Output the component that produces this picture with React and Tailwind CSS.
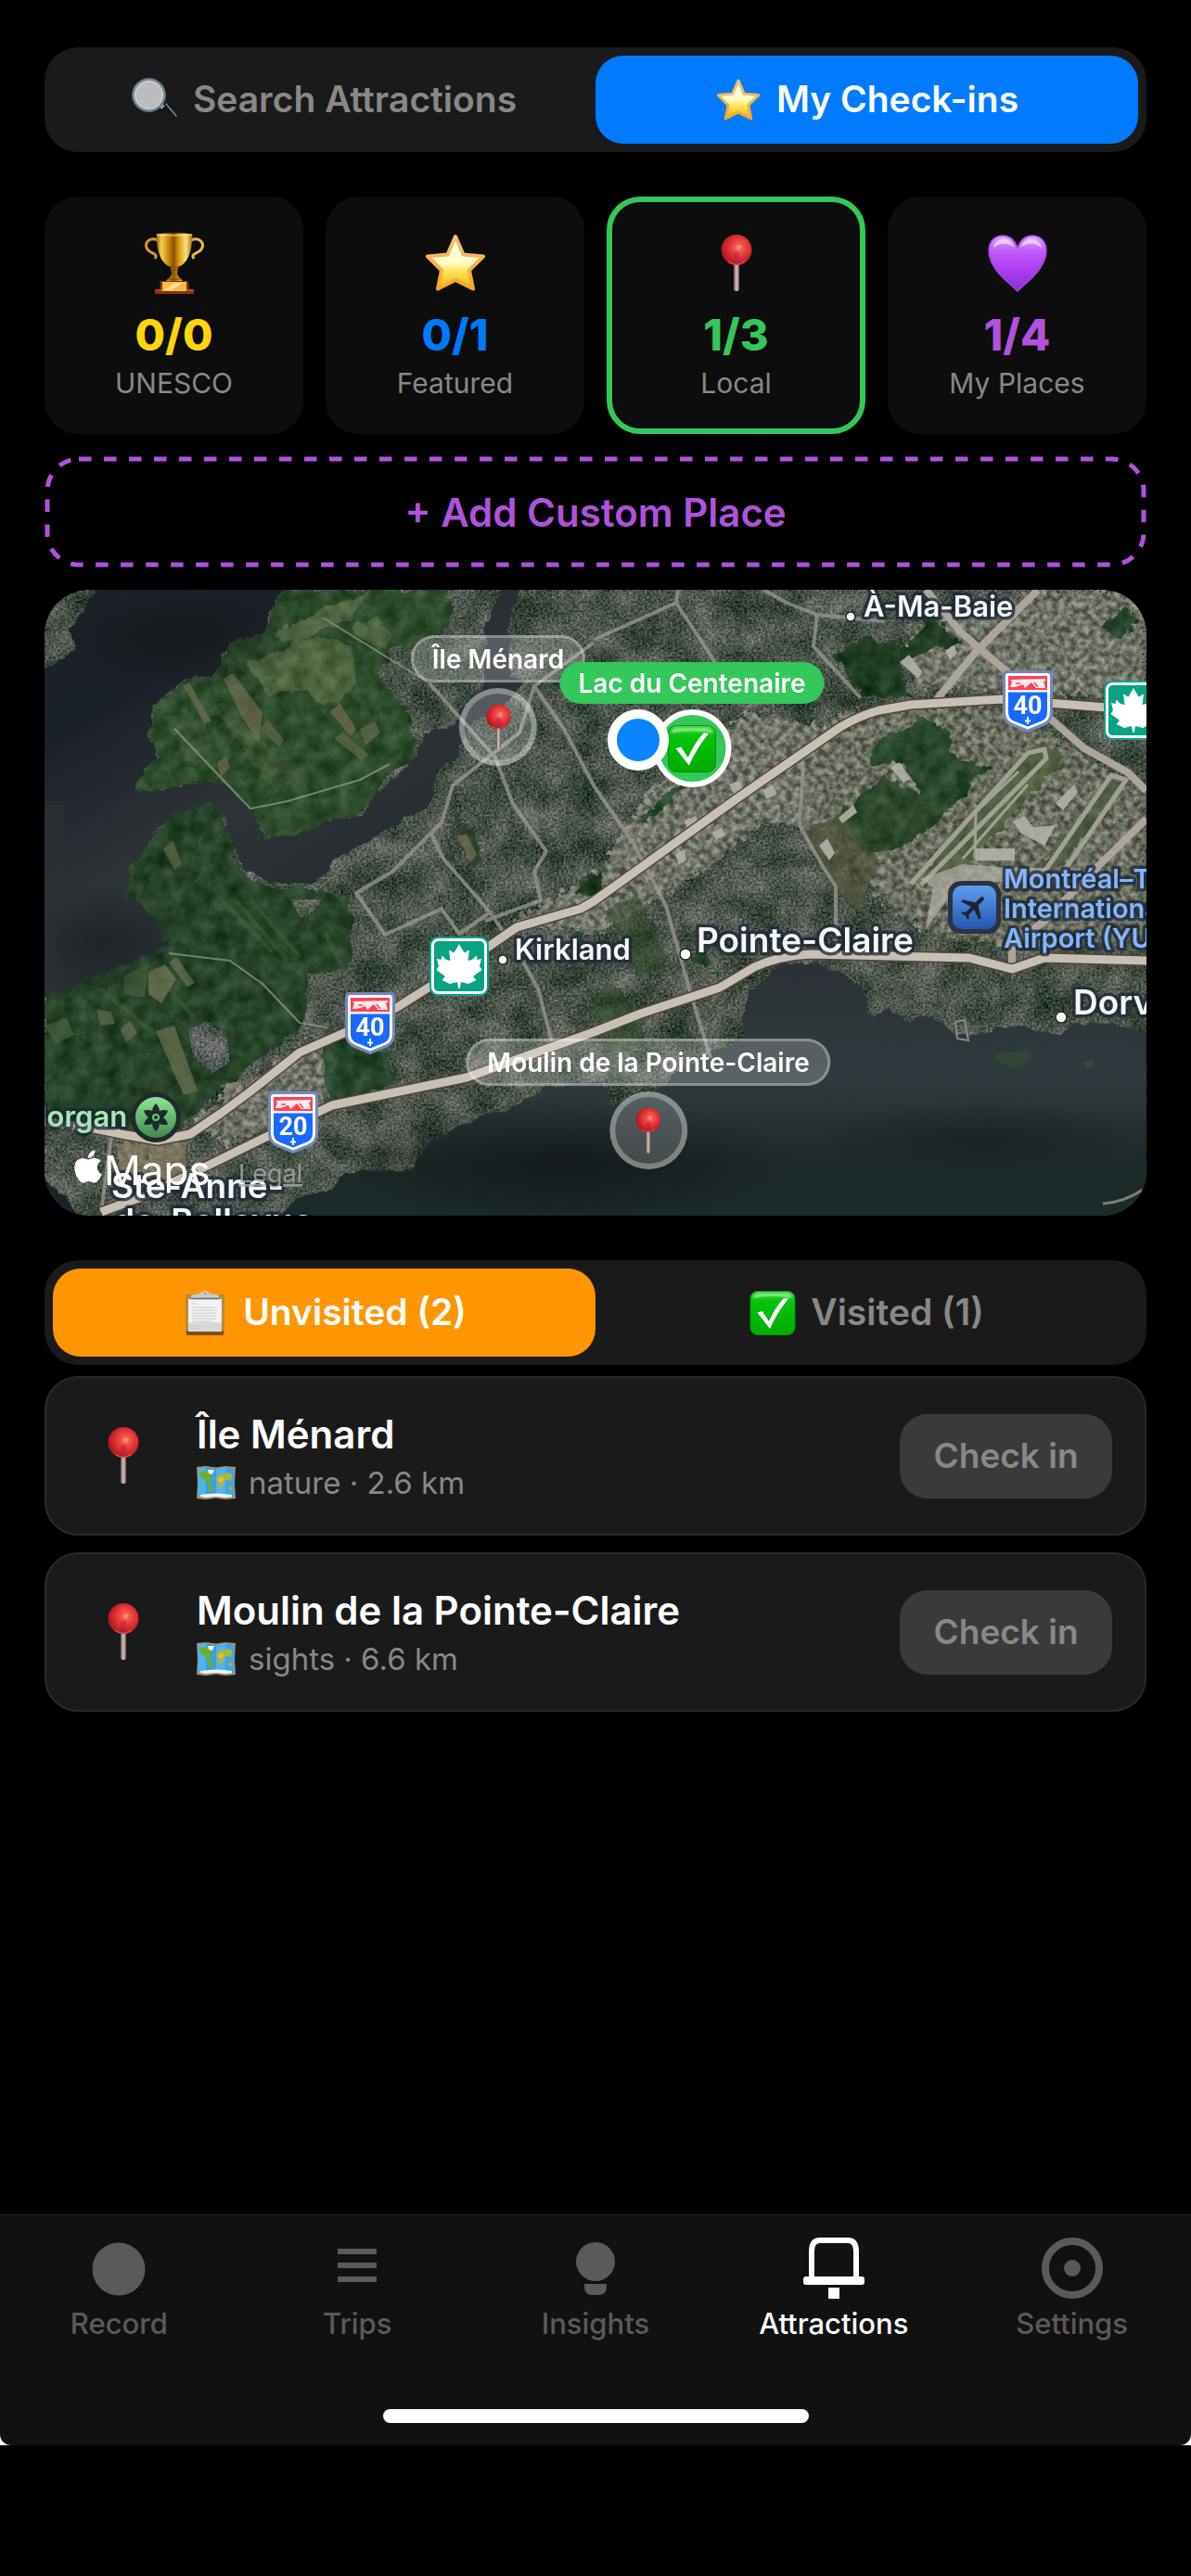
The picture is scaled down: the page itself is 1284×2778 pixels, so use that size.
import React, { useState } from 'react'
import { FaApple } from 'react-icons/fa'
import { MdFlight } from 'react-icons/md'

const MAP_WIDTH = 1188
const MAP_HEIGHT = 675

const StarEmoji = ({ className }) => (
  <svg viewBox="0 0 66 66" className={className} aria-hidden="true">
    <defs>
      <linearGradient id="starFill" x1="0" y1="0" x2="0" y2="1">
        <stop offset="0" stopColor="#fffbe8" />
        <stop offset="0.5" stopColor="#fffbc9" />
        <stop offset="0.68" stopColor="#ffe150" />
        <stop offset="1" stopColor="#f9ae1c" />
      </linearGradient>
      <linearGradient id="starEdge" x1="0" y1="0" x2="0" y2="1">
        <stop offset="0" stopColor="#f3c27a" />
        <stop offset="1" stopColor="#f5a623" />
      </linearGradient>
    </defs>
    <path
      d="M33 4 L41.5 23.5 L63 25.5 L48 40.5 L52 60.5 L33 51 L14 60.5 L18 40.5 L3 25.5 L24.5 23.5 Z"
      fill="url(#starFill)"
      stroke="url(#starEdge)"
      strokeWidth="4"
      strokeLinejoin="round"
    />
  </svg>
)

const TrophyEmoji = ({ className }) => (
  <svg viewBox="0 0 66 66" className={className} aria-hidden="true">
    <defs>
      <linearGradient id="cup" x1="0" y1="0" x2="1" y2="0">
        <stop offset="0" stopColor="#8f5a02" />
        <stop offset="0.14" stopColor="#f7cf5b" />
        <stop offset="0.32" stopColor="#d08f0a" />
        <stop offset="0.48" stopColor="#8a5200" />
        <stop offset="0.62" stopColor="#d9980c" />
        <stop offset="0.82" stopColor="#ffe07a" />
        <stop offset="1" stopColor="#a86c05" />
      </linearGradient>
    </defs>
    <path d="M15 8 C5 4 0 12 4 18 C8 23 16 22 12 28" fill="none" stroke="#d59a22" strokeWidth="3" />
    <path d="M51 8 C61 4 66 12 62 18 C58 23 50 22 54 28" fill="none" stroke="#e8b84a" strokeWidth="3" />
    <path
      d="M13.5 1.5 Q33 -1 52.5 1.5 C52 20 48 33 37 37 L36 44 C37 49 42 50 42 53 L24 53 C24 50 29 49 30 44 L29 37 C18 33 14 20 13.5 1.5 Z"
      fill="url(#cup)"
    />
    <path d="M14 2 Q33 4 52 2" fill="none" stroke="#ffe28a" strokeWidth="1.2" />
    <path d="M28 37 H38 M29 40 H37 M25 50 H41" stroke="#7a4600" strokeWidth="1" />
    <path d="M18 52 H48 L49 61 H54 L54 66 H12 L12 62 L17 61 Z" fill="#8b3206" />
    <path d="M12 62 H54" stroke="#b4561c" strokeWidth="1.5" />
    <rect x="20" y="53" width="26" height="10" fill="#f0bd4c" />
    <path d="M22 62 L34 54 H42 L30 62 Z" fill="#ffe08e" />
  </svg>
)

const PinEmoji = ({ className }) => (
  <svg viewBox="0 0 66 66" className={className} aria-hidden="true">
    <defs>
      <radialGradient id="pinBall" cx="0.58" cy="0.42" r="0.6">
        <stop offset="0" stopColor="#ffa08a" />
        <stop offset="0.2" stopColor="#f4584e" />
        <stop offset="0.65" stopColor="#d92a2c" />
        <stop offset="1" stopColor="#a3181f" />
      </radialGradient>
      <linearGradient id="pinStick" x1="0" y1="0" x2="1" y2="0">
        <stop offset="0" stopColor="#5f5350" />
        <stop offset="0.5" stopColor="#dcc5bd" />
        <stop offset="1" stopColor="#6e5c58" />
      </linearGradient>
    </defs>
    <rect x="30" y="30" width="6" height="33" rx="2.5" fill="url(#pinStick)" />
    <circle cx="33" cy="18.5" r="16.5" fill="url(#pinBall)" />
    <path d="M30 21 H36 V33 Q33 35 30 33 Z" fill="#b32238" opacity="0.5" />
    <path d="M24 31 Q33 38 42 31" fill="none" stroke="#f0627f" strokeWidth="1.5" opacity="0.7" />
  </svg>
)

const HeartEmoji = ({ className }) => (
  <svg viewBox="0 0 66 66" className={className} aria-hidden="true">
    <defs>
      <linearGradient id="heartFill" x1="0" y1="0" x2="0" y2="1">
        <stop offset="0" stopColor="#dca6fb" />
        <stop offset="0.28" stopColor="#bf5df5" />
        <stop offset="0.6" stopColor="#b13df0" />
        <stop offset="1" stopColor="#8a2ed4" />
      </linearGradient>
    </defs>
    <path
      d="M33 63 C25 54 2 40 2 19 C2 9 9 3 17 3 C25 3 30 8 33 16 C36 8 41 3 49 3 C57 3 64 9 64 19 C64 40 41 54 33 63 Z"
      fill="url(#heartFill)"
      stroke="#a243e2"
      strokeWidth="1.5"
    />
    <path d="M7 17 C8 9 14 6 19 6.5 C25 7 28 11 30 16 C24 11 12 10 7 17 Z" fill="#fff" opacity="0.55" />
    <path d="M59 17 C58 9 52 6 47 6.5 C41 7 38 11 36 16 C42 11 54 10 59 17 Z" fill="#fff" opacity="0.55" />
  </svg>
)

const MagnifierEmoji = ({ className }) => (
  <svg viewBox="0 0 50 48" className={className} aria-hidden="true">
    <path d="M34 31 L44 42.5" stroke="#15191d" strokeWidth="10" strokeLinecap="round" />
    <path d="M37 28 L48 41" stroke="#7d8a95" strokeWidth="1.5" strokeLinecap="round" />
    <path d="M29 27 L34 32" stroke="#9aa5ae" strokeWidth="5" />
    <circle cx="18.5" cy="18.5" r="16.5" fill="#bcbcbc" stroke="#7d8c98" strokeWidth="3" />
    <circle cx="18.5" cy="18.5" r="18" fill="none" stroke="#55616c" strokeWidth="1" />
    <circle cx="18.5" cy="18.5" r="15" fill="none" stroke="#dfe5e9" strokeWidth="1" />
  </svg>
)

const ClipboardEmoji = ({ className }) => (
  <svg viewBox="0 0 50 48" className={className} aria-hidden="true">
    <rect x="4" y="4" width="42" height="44" rx="2" fill="#b98a3e" />
    <rect x="5" y="43" width="40" height="5" rx="1" fill="#7c4f16" />
    <path d="M7 9 H43 V44 H7 Z" fill="#f2f2f2" />
    <path d="M7 34 H43 V44 H7 Z" fill="#d8d8d8" />
    <path
      d="M11 14 H16 M11 18 H36 M11 21 H38 M11 24 H37 M11 27 H38 M11 30 H37 M11 33 H32 M11 38 H17 M11 40.5 H18"
      stroke="#c9c9c9"
      strokeWidth="1.2"
    />
    <path d="M10 9 V6 Q10 4 14 4 L20 3 Q21 0 25 0 Q29 0 30 3 L36 4 Q40 4 40 6 V9 Z" fill="#c3cad2" />
    <path d="M10 8.5 H40" stroke="#6f6a66" strokeWidth="1.5" />
    <circle cx="25" cy="3" r="1.5" fill="#ff9500" />
  </svg>
)

const CheckEmoji = ({ className }) => (
  <svg viewBox="0 0 50 48" className={className} aria-hidden="true">
    <defs>
      <linearGradient id="checkFill" x1="0" y1="0" x2="0" y2="1">
        <stop offset="0" stopColor="#57d95b" />
        <stop offset="0.22" stopColor="#06c40b" />
        <stop offset="1" stopColor="#00ab04" />
      </linearGradient>
    </defs>
    <rect x="1" y="0.5" width="48" height="47" rx="8" fill="url(#checkFill)" stroke="#0a8f12" strokeWidth="1" />
    <path d="M4 8 Q5 3 11 3 H39 Q45 3 46 8 Q25 4 4 8 Z" fill="#a8f0a8" opacity="0.6" />
    <path d="M8.5 23.5 L14 22 L21 33 Q28 17 37 8 L42 8.5 Q30 23 22 41 Z" fill="#fff" />
  </svg>
)

const WorldMapEmoji = ({ className }) => (
  <svg viewBox="0 0 42 36" className={className} aria-hidden="true">
    <path d="M0 1 L10 0 L21 1.5 L31 0 L42 1 L41 18 L42 35 L31 36 L21 34.5 L10 36 L0 35 L1 18 Z" fill="#b58a5a" />
    <path d="M1.5 2 L10 1.5 L21 3 L31 1.5 L40.5 2.5 L40 18 L40.5 33.5 L31 34 L21 33 L10 34 L1.5 33 Z" fill="#4fb3ee" />
    <path d="M10 1.5 L21 3 V33 L10 34 Z" fill="#3b9fe0" />
    <path d="M31 1.5 L40.5 2.5 V33.5 L31 34 Z" fill="#3fa5e4" />
    <path d="M3 7 L10 5 L16 8 L17 12 L13 17 L15 20 L18 23 L15 29 L13 27 L12 20 L8 15 L4 11 Z" fill="#6fae2e" />
    <path d="M12 4 L19 4 L17 9 L13 8 Z" fill="#e9eff2" />
    <path d="M22 12 L27 8 L35 7 L39 10 L36 16 L31 15 L29 20 L25 26 L23 19 L21 16 Z" fill="#a7b93b" />
    <path d="M24 13 L29 12 L28 17 L24 17 Z" fill="#e7c14f" />
    <path d="M34 22 L38 22 L38 26 L34 25 Z" fill="#d99a3a" />
    <path d="M4 31 Q21 28 38 31 L38 33.5 L31 34 L21 33 L10 34 L4 33 Z" fill="#eef4f7" />
  </svg>
)

const LEAF =
  'M32 8 L37.5 17.5 L43 14.5 L41.5 26 L46 25 L50.5 20.5 L51.5 25 L56 24 L54 32 L56.5 36 L47 43 L50.5 47 L42 51 L34 49 L32.8 56 H31.2 L30 49 L22 51 L13.5 47 L17 43 L7.5 36 L10 32 L8 24 L12.5 25 L13.5 20.5 L18 25 L22.5 26 L21 14.5 L26.5 17.5 Z'

const Shield = ({ x, y, number }) => (
  <g transform={`translate(${x} ${y})`}>
    <path d="M5 0 H49 Q54 0 54 5 V45 Q54 56 44 60 L27 67 L10 60 Q0 56 0 45 V5 Q0 0 5 0 Z" fill="#7288b5" />
    <path d="M6 3 H48 Q51 3 51 6 V45 Q51 54 43 57 L27 63.5 L11 57 Q3 54 3 45 V6 Q3 3 6 3 Z" fill="#fff" />
    <path d="M6 6 H48 V21 H6 Z" fill="#ff4057" />
    <path d="M8 10 L46 9 V11 L44 12 L46 19 H36 L31 13 L24 19 L22 15 L13 18 L8 18 L10 12 Z" fill="#fff" opacity="0.9" />
    <path d="M14 14 H19 M32 18 L30 14 M38 18 L34 13" stroke="#ff4057" strokeWidth="1.5" />
    <path d="M6 23.5 H48 V45 Q48 52 42 54.5 L27 60.5 L12 54.5 Q6 52 6 45 Z" fill="#1769ff" />
    <text x="27" y="47" textAnchor="middle" fontFamily="Roboto, sans-serif" fontSize="27" fontWeight="700" fill="#fff">
      {number}
    </text>
    <path d="M27 50 V58 M24 54.5 H30" stroke="#fff" strokeWidth="1.8" />
  </g>
)

const LeafSign = ({ x, y }) => (
  <g transform={`translate(${x} ${y})`}>
    <rect width="64" height="64" rx="9" fill="#07a383" />
    <rect x="3.5" y="3.5" width="57" height="57" rx="6" fill="none" stroke="#fff" strokeWidth="3" />
    <path d={LEAF} fill="#fff" />
  </g>
)

const PlaceName = ({ x, y, size, color = '#f7f7f7', children }) => (
  <text
    x={x}
    y={y}
    fontSize={size}
    fontWeight="600"
    fill={color}
    stroke="#1b2537"
    strokeOpacity="0.75"
    strokeWidth="7"
    strokeLinejoin="round"
    paintOrder="stroke"
  >
    {children}
  </text>
)

const Town = ({ x, y, r = 5 }) => <circle cx={x} cy={y} r={r} fill="#fff" stroke="#222" strokeWidth="1.5" />

const HIGHWAYS = [
  'M0 574 L49 580 L88 588 L122 594 L157 587 L191 564 L222 541 L275 499 L325 477 L379 451 L417 427 L480 384 L509 364 L578 344 L592 336 L748 224 L858 148 Q878 136 900 130 L934 124 L1032 118 L1145 127 L1188 131',
  'M61 671 L107 654 L176 621 L237 591 L310 556 L455 526 L592 477 L643 457 L728 429 L765 407 Q790 395 825 393 L997 397 L1043 409 L1078 397 L1188 400'
]

const AVENUES = [
  'M950 0 L989 47 L1036 87 L1082 137 L1121 171 L1168 197 L1188 217',
  'M1071 0 L1004 67 L962 118',
  'M1188 247 L1137 297 L1078 357 L1043 384 V405'
]

const STREETS = [
  'M415 101 L486 181 L505 231 L541 282 L528 304 L535 335 L475 357',
  'M592 57 L528 104 L512 154 L440 211 L428 251 L375 304 L336 327 L367 372 L428 344 L447 371 L482 347',
  'M528 104 L560 150 L592 211 L635 274 L670 341 L697 437 L718 505',
  'M417 264 L430 290 L451 314 L482 350 L495 370',
  'M592 54 L681 14 L683 0 M681 14 L724 80',
  'M775 0 L800 14 L833 27 L905 34 M833 27 L829 61 L880 117',
  'M818 190 L814 254 L840 300 L853 320 V385',
  'M515 400 L532 430 L547 487',
  'M61 671 L72 590'
]

const SatelliteMap = () => (
  <svg
    viewBox={`0 0 ${MAP_WIDTH} ${MAP_HEIGHT}`}
    preserveAspectRatio="xMidYMid slice"
    className="block h-full w-full"
    role="img"
    aria-label="Satellite map of Montréal's West Island"
  >
    <defs>
      <filter id="urban" x="0" y="0" width="100%" height="100%" colorInterpolationFilters="sRGB">
        <feTurbulence type="fractalNoise" baseFrequency="0.03" numOctaves="3" seed="11" result="blocks" />
        <feColorMatrix in="blocks" values="1 0 0 0 0  0.8 0 0 0 0.1  0.9 0 0 0 0.05  0 0 0 0 1" result="patches" />
        <feTurbulence type="fractalNoise" baseFrequency="0.4" numOctaves="2" seed="4" />
        <feColorMatrix values="1.1 0 0 0 -0.05  1 0.1 0 0 -0.05  1 0 0.1 0 -0.05  0 0 0 0 1" result="grain" />
        <feComposite in="SourceGraphic" in2="grain" operator="arithmetic" k2="1" k3="0.5" k4="-0.25" result="textured" />
        <feComposite in="textured" in2="patches" operator="arithmetic" k2="1" k3="0.4" k4="-0.2" />
        <feComposite in2="SourceAlpha" operator="in" />
      </filter>
      <filter id="foliage" x="0" y="0" width="100%" height="100%" colorInterpolationFilters="sRGB">
        <feTurbulence type="fractalNoise" baseFrequency="0.06" numOctaves="5" seed="9" result="noise" />
        <feColorMatrix in="noise" values="1 0 0 0 0  1 0 0 0 0  1 0 0 0 0  0 0 0 0 1" result="grain" />
        <feDisplacementMap in="SourceGraphic" in2="noise" scale="16" xChannelSelector="R" yChannelSelector="G" result="rough" />
        <feComposite in="rough" in2="grain" operator="arithmetic" k2="1" k3="0.24" k4="-0.12" />
        <feComposite in2="rough" operator="in" />
      </filter>
      <filter id="shore" x="0" y="0" width="100%" height="100%" colorInterpolationFilters="sRGB">
        <feTurbulence type="fractalNoise" baseFrequency="0.08" numOctaves="3" seed="2" result="noise" />
        <feDisplacementMap in="SourceGraphic" in2="noise" scale="9" xChannelSelector="R" yChannelSelector="G" />
      </filter>
      <filter id="roofs" x="0" y="0" width="100%" height="100%" colorInterpolationFilters="sRGB">
        <feTurbulence type="fractalNoise" baseFrequency="0.15" numOctaves="3" seed="21" result="noise" />
        <feColorMatrix in="noise" values="2 0 0 0 -0.5  2 0 0 0 -0.5  2 0 0 0 -0.5  0 0 0 0 1" result="grain" />
        <feDisplacementMap in="SourceGraphic" in2="noise" scale="24" xChannelSelector="R" yChannelSelector="G" result="rough" />
        <feComposite in="rough" in2="grain" operator="arithmetic" k2="1" k3="0.36" k4="-0.18" />
        <feComposite in2="rough" operator="in" />
      </filter>
      <linearGradient id="northLake" x1="0" y1="0" x2="0.7" y2="1">
        <stop offset="0" stopColor="#1f242b" />
        <stop offset="0.25" stopColor="#1a2027" />
        <stop offset="0.55" stopColor="#2d3337" />
        <stop offset="1" stopColor="#23272f" />
      </linearGradient>
      <linearGradient id="southLake" x1="0" y1="0" x2="0" y2="1">
        <stop offset="0" stopColor="#2b3136" />
        <stop offset="0.45" stopColor="#303a3e" />
        <stop offset="0.75" stopColor="#1e2a2a" />
        <stop offset="1" stopColor="#1b2b29" />
      </linearGradient>
      <radialGradient id="deep">
        <stop offset="0" stopColor="#101416" stopOpacity="0.9" />
        <stop offset="1" stopColor="#101416" stopOpacity="0" />
      </radialGradient>
      <linearGradient id="plane" x1="0" y1="0" x2="0" y2="1">
        <stop offset="0" stopColor="#5f9df0" />
        <stop offset="1" stopColor="#2257ae" />
      </linearGradient>
      <linearGradient id="park" x1="0" y1="0" x2="0" y2="1">
        <stop offset="0" stopColor="#8fe596" />
        <stop offset="1" stopColor="#3d8a4c" />
      </linearGradient>
    </defs>

    {/* Built-up land */}
    <rect width={MAP_WIDTH} height={MAP_HEIGHT} fill="#485248" filter="url(#urban)" />

    {/* Industrial strips along the highways */}
    <g filter="url(#roofs)" opacity="0.9">
      <path d="M500 360 L600 300 L650 220 L760 130 L850 150 L960 120 L930 190 L850 260 L780 250 L700 310 L600 370 Z" fill="#75776d" />
      <path d="M930 40 L1010 20 L1080 0 L1188 0 L1188 120 L1050 110 L940 105 Z" fill="#73766b" />
      <path d="M860 130 L1030 125 L1110 170 L1188 220 L1188 380 L1040 385 L950 370 L850 290 L820 200 Z" fill="#6d7163" />
      <path d="M160 570 L300 480 L310 550 L200 600 Z" fill="#71746a" />
      <path d="M78 595 H152 V640 L80 650 Z" fill="#76705a" />
      <path d="M185 500 L205 500 L215 550 L195 560 Z" fill="#7d7d74" />
    </g>

    {/* Woods, parks and farmland */}
    <g filter="url(#foliage)">
      <path d="M250 0 L436 0 L436 36 L400 62 L371 61 L360 95 L385 125 L400 160 L401 181 L371 207 L340 244 L302 249 L283 265 L237 268 L215 236 L183 207 L97 220 L97 200 L122 181 L112 157 L118 127 L151 97 L183 91 L199 57 L237 47 Z" fill="#2d4b2d" />
      <path d="M70 334 L84 300 L122 250 L150 236 L176 228 L191 241 L214 305 L245 322 L290 322 L329 334 L331 411 L283 414 L283 461 L240 500 L176 550 L145 585 L0 580 L0 430 L46 416 L103 392 L134 380 Z" fill="#27432a" />
      <path d="M298 486 L325 480 L372 500 L378 534 L310 552 Z" fill="#26452c" />
      <path d="M850 72 L885 52 L930 60 L945 40 L950 20 L985 55 L920 80 L935 115 L884 117 Z" fill="#203d24" />
      <path d="M895 165 L950 140 L978 155 L975 180 L1020 190 L970 240 L950 235 L925 185 L890 190 Z" fill="#28472c" />
      <path d="M848 250 L905 200 L935 215 L975 240 L930 275 L890 285 L860 265 Z" fill="#2c472c" />
      <path d="M1135 40 L1165 20 L1180 30 L1160 52 Z" fill="#26432c" />
      <path d="M590 440 L610 425 L650 460 L640 500 L600 490 Z" fill="#375434" opacity="0.7" />
      <path d="M605 345 L640 330 L672 400 L640 420 Z" fill="#3b5233" opacity="0.7" />
      <path d="M640 250 L672 215 L700 205 L650 250 Z M696 397 L712 390 L722 404 L706 410 Z" fill="#2a4a2c" />
      <path d="M448 262 L462 258 L472 290 L462 300 Z" fill="#2c4228" />
      <path d="M570 325 L600 300 L600 335 Z" fill="#223c24" />
    </g>

    {/* Golf courses and fields */}
    <g filter="url(#foliage)">
      <path d="M218 80 L260 62 L300 50 L330 60 L337 100 L320 118 L300 128 L280 108 L240 112 Z" fill="#63784d" opacity="0.85" />
      <path d="M245 50 L300 20 L352 0 L330 32 L270 60 Z" fill="#6c8054" opacity="0.8" />
      <path d="M330 40 L360 30 L375 50 L366 62 L345 60 Z" fill="#61764b" opacity="0.8" />
      <path d="M180 120 L200 130 L285 205 L250 218 L215 180 Z" fill="#526b43" opacity="0.7" />
      <path d="M128 140 L150 125 L182 160 L180 190 L150 180 Z" fill="#4f6540" opacity="0.7" />
      <path d="M820 260 L860 240 L880 270 L900 290 L880 345 L850 330 Z" fill="#575e43" opacity="0.8" />
      <path d="M935 316 L1010 225 L1070 165 L1100 180 L1000 290 L960 320 Z" fill="#566245" />
      <path d="M1065 305 L1150 205 L1168 210 L1085 308 Z" fill="#505b43" />
    </g>
    <g opacity="0.6">
      <path d="M193 96 L203 90 L235 132 L231 165 L212 136 Z M150 104 L156 100 L180 142 L172 144 Z" fill="#7d7058" />
      <path d="M308 132 L318 122 L336 150 L330 158 Z M186 186 L196 180 L200 192 L190 202 Z" fill="#806f55" />
      <path d="M312 160 L322 154 L350 178 L342 184 Z M340 150 L356 142 L362 154 L346 168 Z" fill="#6c6f4d" />
      <path d="M232 150 L240 140 L258 162 L254 170 Z M128 280 L138 270 L148 296 L140 302 Z" fill="#6b6a4c" />
      <path d="M112 412 L130 404 L142 420 L126 446 L112 436 Z" fill="#8b8664" />
      <path d="M134 402 L142 396 L162 424 L154 428 Z M120 476 L140 470 L165 540 L150 545 Z" fill="#767a58" />
      <path d="M85 416 L112 404 L108 440 L86 436 Z M0 470 L24 462 L32 480 L12 490 Z" fill="#4f6640" />
      <path d="M56 452 L72 456 L76 468 L60 470 Z M82 474 L92 464 L100 478 L88 488 Z" fill="#6e7350" />
      <path d="M445 266 L455 263 L466 285 L460 294 Z" fill="#82775a" />
      <path d="M78 598 H110 V640 H82 Z M114 596 H152 V634 L120 640 Z" fill="#837c64" />
    </g>
    <path
      d="M192 336 L245 390 M205 334 L262 400 M222 334 L275 396 M302 370 L328 420 M90 380 L160 460 M60 430 L120 480"
      stroke="#4d6a42"
      strokeWidth="5"
      opacity="0.35"
    />
    {/* Subdivisions inside the woods */}
    <g filter="url(#urban)">
      <path d="M155 475 L175 465 L196 478 L200 510 L180 522 L160 505 Z" fill="#535a56" />
      <path d="M284 414 L325 412 L331 450 L300 480 L284 460 Z" fill="#4b544a" />
      <path d="M265 334 L298 334 L296 345 L276 355 Z" fill="#50594c" />
      <path d="M358 216 L372 196 L400 184 L392 205 L368 230 Z" fill="#50594f" />
    </g>

    {/* Water */}
    <g filter="url(#shore)">
      <path
        d="M-10 92 L34 66 L28 44 L61 -10 L260 -10 L241 27 L237 47 L199 57 L183 91 L151 97 L118 127 L112 157 L122 181 L97 207 L99 219 L145 212 L183 207 L200 214 L222 236 L237 268 L283 261 L302 249 L340 244 L371 207 L401 181 L409 154 L440 147 L451 127 L474 101 L475 37 L497 -10 L516 -10 L501 31 L501 94 L520 97 L486 134 L459 141 L444 181 L424 194 L413 234 L375 254 L348 271 L313 291 L290 317 L245 317 L214 301 L204 274 L191 241 L176 231 L145 241 L122 257 L107 281 L91 304 L84 334 L99 334 L118 357 L134 384 L103 396 L46 421 L-10 445 Z"
        fill="url(#northLake)"
      />
      <path
        d="M237 685 L279 654 L310 646 L325 627 L359 627 L398 624 L417 594 L451 577 L486 564 L501 561 L539 537 L592 531 L611 537 L608 557 L640 545 L670 534 L678 524 L720 497 L752 487 L753 461 L759 434 L783 414 L790 404 L825 402 L860 414 L884 434 L890 461 L911 451 L932 466 L946 459 L969 467 L981 481 L1012 479 L1028 471 L1055 472 L1094 481 L1113 469 L1148 466 L1176 474 L1198 481 V685 Z"
        fill="url(#southLake)"
      />
      <path d="M-10 630 L23 654 L40 685 H-10 Z" fill="#1c2228" />
    </g>
    <ellipse cx="140" cy="50" rx="150" ry="60" fill="url(#deep)" opacity="0.6" />
    <ellipse cx="60" cy="380" rx="90" ry="60" fill="url(#deep)" opacity="0.5" />
    <ellipse cx="560" cy="620" rx="260" ry="70" fill="url(#deep)" opacity="0.8" />
    <ellipse cx="1010" cy="590" rx="180" ry="40" fill="url(#deep)" opacity="0.5" />
    <path d="M0 228 H21 V325 H0 Z" fill="#2c3133" opacity="0.7" />
    <path d="M1025 500 L1064 496 L1062 508 L1045 517 L1024 506 Z" fill="#2f4632" />
    <path d="M1120 510 L1130 507 L1132 514 L1124 516 Z" fill="#33493a" />
    <path d="M1141 662 Q1165 660 1184 647" fill="none" stroke="#7c7f72" strokeWidth="3" />
    <path d="M982 466 L992 464 L996 486 L984 484 Z" fill="none" stroke="#878b83" strokeWidth="2" />

    {/* Runways and terminals */}
    <g fill="none" stroke="#a0a196" strokeWidth="5">
      <path d="M934 317 L1060 176 L1078 172 L1080 182 L945 318" />
      <path d="M1078 304 L1150 200 L1166 205 L1096 308" />
      <path d="M1003 290 L1004 240 L1050 196 M990 290 L1060 210" strokeWidth="3" />
    </g>
    <g fill="#b3b2a7" opacity="0.9">
      <path d="M944 312 L990 296 L1040 300 L1080 300 L1080 312 L985 318 L950 366 L958 320 Z" opacity="0.8" />
      <path d="M1004 279 H1046 V292 H1004 Z M1044 250 L1056 244 L1066 256 L1090 254 L1078 276 L1052 262 Z" />
      <path d="M1090 230 L1110 210 L1114 218 L1098 238 Z" />
      <path d="M922 78 L932 70 L946 88 L942 96 Z M971 66 L980 60 L984 68 L976 76 Z" />
      <path d="M856 246 L872 232 L876 240 L860 252 Z M835 276 L844 268 L852 284 L846 292 Z" />
      <path d="M738 210 L748 206 L754 216 L744 222 Z M775 216 L785 210 L790 220 L778 226 Z M690 250 L702 244 L706 254 L694 260 Z" />
      <path d="M720 262 L730 256 L734 264 L724 270 Z M680 286 L690 280 L692 292 L684 296 Z M912 192 L922 186 L934 204 L926 208 Z" />
    </g>

    <g fill="none" stroke="#9b9993" strokeWidth="4" strokeLinejoin="round" opacity="0.75">
      {STREETS.map((d) => (
        <path key={d} d={d} />
      ))}
      <path d="M300 30 L415 101 M140 150 L222 236 L262 228 L340 205 L372 188 M134 392 L200 400 L235 425 L275 467 L305 472" stroke="#8f9a86" strokeWidth="2" />
    </g>
    <g fill="none" strokeLinejoin="round">
      {AVENUES.map((d) => (
        <path key={d} d={d} stroke="#aca59b" strokeWidth="8" />
      ))}
      {HIGHWAYS.map((d) => (
        <path key={d} d={d} stroke="#564438" strokeWidth="12" />
      ))}
      {HIGHWAYS.map((d) => (
        <path key={d} d={d} stroke="#c6c0b6" strokeWidth="9" />
      ))}
    </g>

    {/* Route markers */}
    <Shield x={1033} y={87} number="40" />
    <Shield x={324} y={434} number="40" />
    <Shield x={241} y={541} number="20" />
    <LeafSign x={415} y={374} />
    <LeafSign x={1142} y={98} />

    {/* Place names */}
    <Town x={869} y={29} />
    <PlaceName x={883} y={29} size={31}>À-Ma-Baie</PlaceName>
    <Town x={494} y={399} />
    <PlaceName x={507} y={399} size={31}>Kirkland</PlaceName>
    <Town x={691} y={393} r={6} />
    <PlaceName x={703} y={391} size={37}>Pointe-Claire</PlaceName>
    <Town x={1096} y={461} r={6} />
    <PlaceName x={1109} y={458} size={37}>Dorval</PlaceName>

    <PlaceName x={1034} y={322} size={29} color="#83b7fb">Montréal–Trudeau</PlaceName>
    <PlaceName x={1034} y={354} size={29} color="#83b7fb">International</PlaceName>
    <PlaceName x={1034} y={386} size={29} color="#83b7fb">Airport (YUL)</PlaceName>
    <rect x="974" y="314" width="57" height="57" rx="14" fill="#2c3242" />
    <rect x="979" y="319" width="47" height="47" rx="10" fill="url(#plane)" />
    <g transform="rotate(45 1002.5 342.5)">
      <MdFlight x="985" y="325" size={35} color="#1c2434" />
    </g>

    <PlaceName x={-26} y={579} size={31} color="#a5eab0">Morgan</PlaceName>
    <circle cx="120" cy="569" r="27" fill="#202a2c" />
    <circle cx="120" cy="569" r="22" fill="url(#park)" />
    <g fill="#1c2b2b" transform="translate(120 569)">
      {[0, 60, 120, 180, 240, 300].map((angle) => (
        <path key={angle} d="M0 -15 Q6 -9 3 -2 H-3 Q-6 -9 0 -15 Z" transform={`rotate(${angle})`} />
      ))}
      <circle r="4" fill="#6cc676" />
      <circle r="2" />
    </g>

    <PlaceName x={72} y={656} size={37}>Ste-Anne-</PlaceName>
    <PlaceName x={74} y={694} size={37}>de-Bellevue</PlaceName>
    <FaApple x="27" y="602" size={40} color="#fff" />
    <text x="64" y="642" fontSize="44" fill="#fff">Maps</text>
    <text x="209" y="639" fontSize="27" fill="#a9aca8" textDecoration="underline" opacity="0.8">Legal</text>
  </svg>
)

const pins = [
  { id: 'ile-menard', name: 'Île Ménard', x: 489, y: 49, visited: false },
  { id: 'moulin', name: 'Moulin de la Pointe-Claire', x: 651, y: 484, visited: false },
  { id: 'lac', name: 'Lac du Centenaire', x: 698, y: 78, visited: true }
]

const MapPin = ({ pin }) => (
  <button
    type="button"
    className="absolute flex -translate-x-1/2 flex-col items-center gap-[6px]"
    style={{ left: `${(pin.x / MAP_WIDTH) * 100}%`, top: `${(pin.y / MAP_HEIGHT) * 100}%` }}
  >
    {pin.visited ? (
      <>
        <span className="flex h-[45px] items-center rounded-full bg-[#34c759] px-5 text-[28px] font-semibold whitespace-nowrap text-white">
          {pin.name}
        </span>
        <span className="flex h-[84px] w-[84px] items-center justify-center rounded-full border-[6px] border-white bg-[#34c759]">
          <CheckEmoji className="h-[51px] w-[53px]" />
        </span>
      </>
    ) : (
      <>
        <span className="flex h-[51px] items-center rounded-full border-[3px] border-white/30 bg-white/20 px-5 text-[28px] font-semibold whitespace-nowrap text-white">
          {pin.name}
        </span>
        <span className="flex h-[84px] w-[84px] items-center justify-center rounded-full border-[6px] border-white/30 bg-white/20">
          <PinEmoji className="h-[53px] w-[53px]" />
        </span>
      </>
    )}
  </button>
)

const categories = [
  { id: 'unesco', label: 'UNESCO', count: '0/0', Icon: TrophyEmoji, color: 'text-[#ffd60a]' },
  { id: 'featured', label: 'Featured', count: '0/1', Icon: StarEmoji, color: 'text-[#007aff]' },
  { id: 'local', label: 'Local', count: '1/3', Icon: PinEmoji, color: 'text-[#34c759]' },
  { id: 'my-places', label: 'My Places', count: '1/4', Icon: HeartEmoji, color: 'text-[#af52de]' }
]

const places = [
  { id: 1, name: 'Île Ménard', detail: 'nature · 2.6 km' },
  { id: 2, name: 'Moulin de la Pointe-Claire', detail: 'sights · 6.6 km' }
]

const navItems = [
  {
    id: 'record',
    label: 'Record',
    icon: <circle cx="33" cy="34" r="28.5" />
  },
  {
    id: 'trips',
    label: 'Trips',
    icon: <path d="M12 12 H54 V18 H12 Z M12 27 H54 V33 H12 Z M12 42 H54 V48 H12 Z" />
  },
  {
    id: 'insights',
    label: 'Insights',
    icon: (
      <>
        <circle cx="33" cy="26" r="21" />
        <path d="M21 50 H45 V53 Q45 62 36 62 H30 Q21 62 21 53 Z" />
      </>
    )
  },
  {
    id: 'attractions',
    label: 'Attractions',
    icon: (
      <>
        <path d="M9 44 V15 Q9 3 18 3 H48 Q57 3 57 15 V44" fill="none" stroke="currentColor" strokeWidth="6" />
        <rect x="0" y="42" width="66" height="9" rx="3" />
        <rect x="27" y="54" width="12" height="12" />
      </>
    )
  },
  {
    id: 'settings',
    label: 'Settings',
    icon: (
      <>
        <circle cx="33" cy="33" r="29" fill="none" stroke="currentColor" strokeWidth="8" />
        <circle cx="33" cy="33" r="9" />
      </>
    )
  }
]

const SegmentButton = ({ active, activeClass, onClick, Icon, children }) => (
  <button
    type="button"
    aria-pressed={active}
    onClick={onClick}
    className={`flex h-[95px] flex-1 items-center justify-center gap-4 rounded-[30px] text-[39px] font-semibold ${
      active ? activeClass : 'text-[#888888]'
    }`}
  >
    <Icon className="h-12 w-[50px]" />
    <span>{children}</span>
  </button>
)

export default function App() {
  const [view, setView] = useState('checkins')
  const [category, setCategory] = useState('local')
  const [filter, setFilter] = useState('unvisited')
  const [tab, setTab] = useState('attractions')

  return (
    <div className="flex min-h-screen flex-col bg-black pb-[141px] font-['Inter','Liberation_Sans',sans-serif] text-white">
      <main className="flex-1 px-12 pt-[51px]">
        <div className="flex rounded-[36px] bg-[#1a1a1a] p-[9px]">
          <SegmentButton
            active={view === 'search'}
            activeClass="bg-[#007aff] text-white"
            onClick={() => setView('search')}
            Icon={MagnifierEmoji}
          >
            Search Attractions
          </SegmentButton>
          <SegmentButton
            active={view === 'checkins'}
            activeClass="bg-[#007aff] text-white"
            onClick={() => setView('checkins')}
            Icon={StarEmoji}
          >
            My Check-ins
          </SegmentButton>
        </div>

        <div className="mt-12 grid grid-cols-4 gap-6">
          {categories.map(({ id, label, count, Icon, color }) => (
            <button
              key={id}
              type="button"
              aria-pressed={category === id}
              onClick={() => setCategory(id)}
              className={`flex h-64 flex-col items-center rounded-[36px] border-[6px] bg-[#0d0d0d] pt-[33px] ${
                category === id ? 'border-[#34c759]' : 'border-[#0d0d0d]'
              }`}
            >
              <Icon className="h-[66px] w-[66px]" />
              <span className={`mt-[14px] text-[47px] leading-[60px] font-extrabold ${color}`}>{count}</span>
              <span className="text-[30px] leading-[44px] text-[#888888]">{label}</span>
            </button>
          ))}
        </div>

        <button
          type="button"
          className="relative mt-6 flex h-[120px] w-full items-center justify-center rounded-[36px] text-[42px] font-semibold text-[#af52de]"
        >
          <svg className="absolute inset-0 h-full w-full p-[3px]" overflow="visible" aria-hidden="true">
            <rect width="100%" height="100%" rx="34" fill="none" stroke="currentColor" strokeWidth="5" strokeDasharray="13.5" />
          </svg>
          + Add Custom Place
        </button>

        <div className="relative mt-6 h-[675px] overflow-hidden rounded-[48px]">
          <SatelliteMap />
          {pins.map((pin) => (
            <MapPin key={pin.id} pin={pin} />
          ))}
          {/* Current position */}
          <span
            className="absolute h-[66px] w-[66px] -translate-x-1/2 rounded-full border-[10px] border-white bg-[#0a84ff]"
            style={{ left: `${(640 / MAP_WIDTH) * 100}%`, top: `${(129 / MAP_HEIGHT) * 100}%` }}
          />
        </div>

        <div className="mt-12 flex rounded-[36px] bg-[#1a1a1a] p-[9px]">
          <SegmentButton
            active={filter === 'unvisited'}
            activeClass="bg-[#ff9500] text-white"
            onClick={() => setFilter('unvisited')}
            Icon={ClipboardEmoji}
          >
            Unvisited (2)
          </SegmentButton>
          <SegmentButton
            active={filter === 'visited'}
            activeClass="bg-[#ff9500] text-white"
            onClick={() => setFilter('visited')}
            Icon={CheckEmoji}
          >
            Visited (1)
          </SegmentButton>
        </div>

        <ul className="mt-3 flex flex-col gap-[18px]">
          {places.map((place) => (
            <li
              key={place.id}
              className="flex h-[172px] items-center rounded-[36px] border-2 border-[#2a2a2a] bg-[#1a1a1a] pr-[35px] pl-[50px]"
            >
              <PinEmoji className="h-[66px] w-[66px]" />
              <div className="ml-[46px] flex-1 pt-1">
                <h3 className="text-[42px] leading-[54px] font-semibold">{place.name}</h3>
                <p className="flex items-center gap-[14px] text-[33px] leading-[50px] text-[#888888]">
                  <WorldMapEmoji className="h-9 w-[42px]" />
                  {place.detail}
                </p>
              </div>
              <button
                type="button"
                className="h-[91px] w-[229px] rounded-[30px] bg-[#3a3a3a] text-[37px] font-semibold text-[#888888]"
              >
                Check in
              </button>
            </li>
          ))}
        </ul>
      </main>

      <div className="bg-white">
        <nav className="flex flex-col items-center rounded-b-xl border-t border-[#222222] bg-[#111111] pt-6 pb-6">
          <div className="flex w-full">
            {navItems.map((item) => (
              <button
                key={item.id}
                type="button"
                onClick={() => setTab(item.id)}
                className={`flex flex-1 flex-col items-center gap-[6px] text-[31px] leading-[42px] font-medium ${
                  tab === item.id ? 'text-white' : 'text-[#5a5a5a]'
                }`}
              >
                <svg viewBox="0 0 66 66" className="h-[66px] w-[66px]" fill="currentColor" aria-hidden="true">
                  {item.icon}
                </svg>
                {item.label}
              </button>
            ))}
          </div>
          <div className="mt-[71px] h-[15px] w-[459px] rounded-full bg-white" />
        </nav>
      </div>
    </div>
  )
}
